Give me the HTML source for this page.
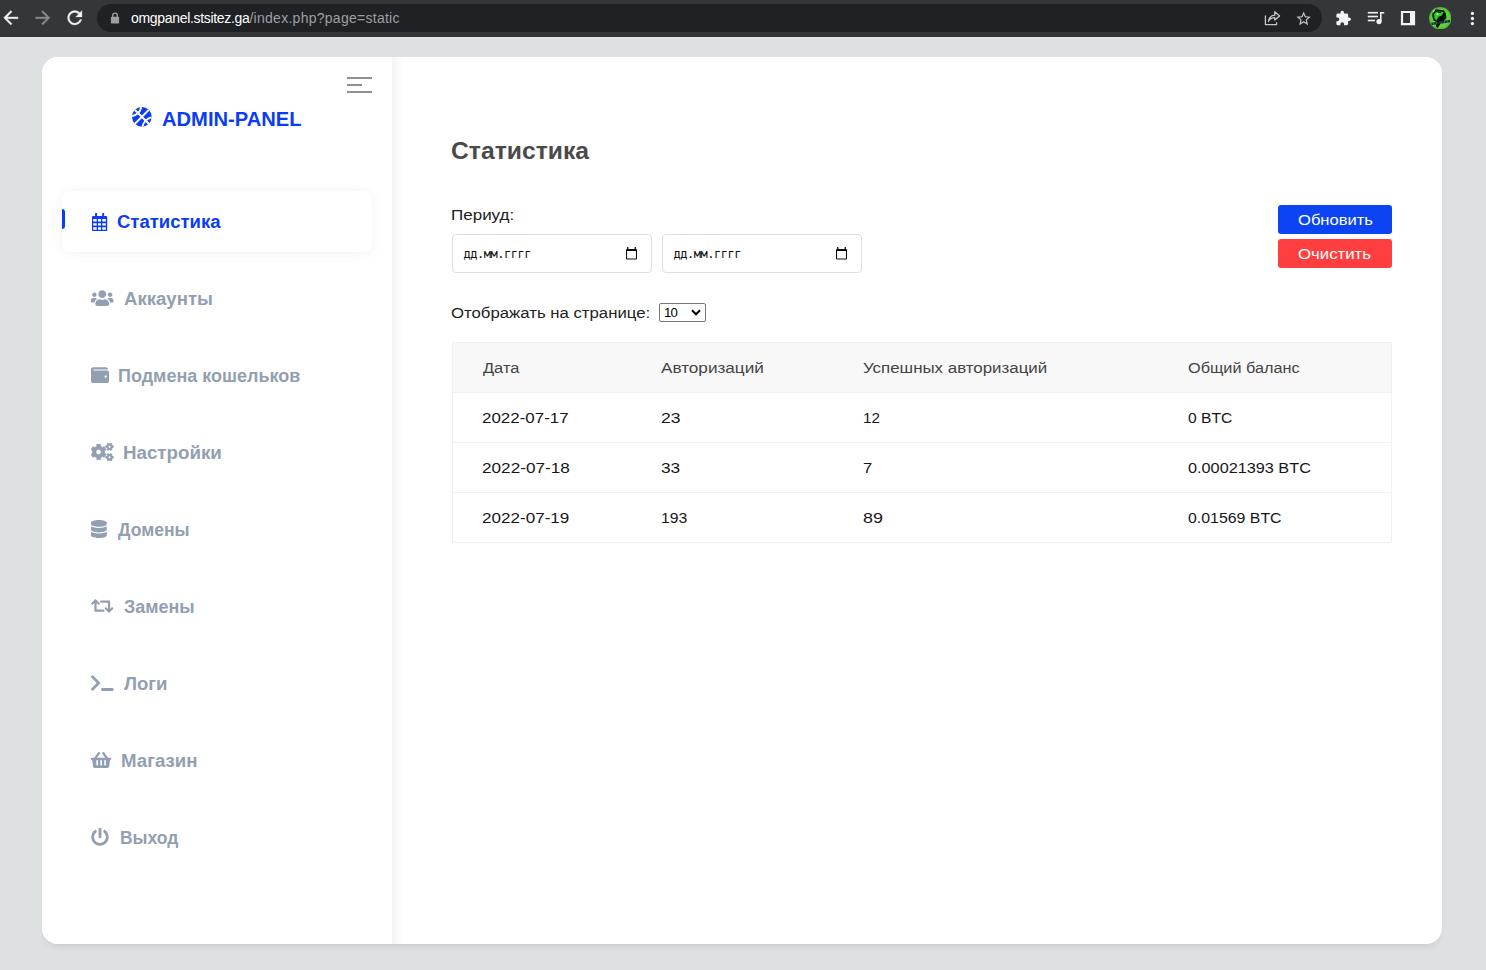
<!DOCTYPE html>
<html lang="ru">
<head>
<meta charset="utf-8">
<title>ADMIN-PANEL</title>
<style>
*{box-sizing:border-box;margin:0;padding:0}
html,body{width:1486px;height:970px;overflow:hidden}
body{background:#dde1e2;font-family:"Liberation Sans",sans-serif;position:relative;color:#222}
.mi,#logo,#title,.lbl,.td,.bt{transform-origin:0 50%}
/* browser chrome */
#chrome{position:absolute;left:0;top:0;width:1486px;height:37px;background:#35363a;box-shadow:inset 0 -1px 0 #313236,0 1px 0 #e3e7e8}
#omni{position:absolute;left:97px;top:4px;width:1225px;height:28px;border-radius:14px;background:#202124}
#url{position:absolute;left:131px;top:10px;font-size:14px;line-height:16px;color:#9aa0a6;white-space:nowrap;letter-spacing:0}
#url b{font-weight:normal;color:#fff}
.cicon{position:absolute}
/* card */
#card{position:absolute;left:42px;top:57px;width:1400px;height:887px;background:#fff;border-radius:16px;box-shadow:0 6px 7px -4px rgba(110,120,130,.2)}
#side{position:absolute;left:0;top:0;width:350px;height:887px;border-radius:16px 0 0 16px;background:#fff}
#sideshadow{position:absolute;left:350px;top:0;width:12px;height:887px;background:linear-gradient(to right,#f3f5f7 0,#f8f9f9 40%,#fcfdfd 75%,#fff 100%)}
#burger{position:absolute;left:305px;top:20px;width:25px;height:16px}
#burger i{position:absolute;left:0;height:2px;background:#909090;display:block}
#logo{position:absolute;top:50px;font-size:19.5px;line-height:24px;font-weight:bold;color:#0b3cf5;white-space:nowrap}
#active{position:absolute;left:20px;top:134px;width:310px;height:61px;border-radius:8px;background:#fff;box-shadow:0 1px 12px rgba(100,110,130,.085)}
#bar{position:absolute;left:20px;top:152px;width:3px;height:20px;background:#0b3cf5;border-radius:0 3px 3px 0}
.mi{position:absolute;font-size:18px;line-height:22px;font-weight:bold;color:#929fb1;white-space:nowrap}
.mi.on{color:#0b3cf5}
.ic{position:absolute}
/* main */
#title{position:absolute;top:80px;font-size:23.5px;line-height:28px;font-weight:bold;color:#4a4a4a;white-space:nowrap}
.lbl{position:absolute;font-size:15.5px;line-height:20px;color:#222;white-space:nowrap}
.date{position:absolute;top:177px;width:200px;height:39px;border:1px solid #dfdfdf;border-radius:4px;background:#fff}
.date span{position:absolute;left:10.5px;top:11px;font-family:"DejaVu Sans Mono","Liberation Mono",monospace;font-size:12px;line-height:16px;color:#111;letter-spacing:-0.48px}
.date svg{position:absolute;left:173.2px;top:12.2px}
#sel{position:absolute;left:617px;top:246px;width:47px;height:19px;border:1px solid #767676;border-radius:2px;background:#fff}
#sel span{position:absolute;left:4.3px;top:0.5px;font-size:12.7px;line-height:16px;color:#000;letter-spacing:-0.9px;transform:scaleX(1.04);transform-origin:0 50%}
.btn{position:absolute;left:1236px;width:114px;height:29px;border-radius:3px;color:#fff;font-size:15.5px;line-height:29px}
.bt{position:absolute;top:0;white-space:nowrap}
#tbl{position:absolute;left:410px;top:285px;width:940px;height:201px;border:1px solid #f0f0f7;background:#fff}
#th{position:absolute;left:0;top:0;width:938px;height:50px;background:#f8f8f8;border-bottom:1px solid #f0f0f7}
.tr{position:absolute;left:0;width:938px;height:50px;border-bottom:1px solid #f0f0f7}
.td{position:absolute;font-size:15.5px;line-height:20px;white-space:nowrap;color:#161616}
.th{color:#444}
</style>
</head>
<body>
<div id="chrome">
  <div id="omni"></div>

  <svg class="cicon" style="left:0.2px;top:7.2px" width="21.6" height="21.6" viewBox="0 0 24 24"><path fill="#f1f3f4" stroke="#f1f3f4" stroke-width=".35" d="M20 11H7.830l5.590-5.590L12 4l-8 8 8 8 1.410-1.410L7.830 13H20v-2z"/></svg>
  <svg class="cicon" style="left:32.300px;top:7.200px" width="21.6" height="21.6" viewBox="0 0 24 24"><path fill="#88898c" stroke="#88898c" stroke-width=".35" d="M12 4l-1.410 1.410L16.170 11H4v2h12.170l-5.580 5.590L12 20l8-8z"/></svg>
  <svg class="cicon" style="left:64.300px;top:7.200px" width="21.6" height="21.6" viewBox="0 0 24 24"><path fill="#f1f3f4" stroke="#f1f3f4" stroke-width=".3" d="M17.650 6.350C16.200 4.900 14.210 4 12 4c-4.420 0-7.990 3.580-7.990 8s3.570 8 7.990 8c3.730 0 6.840-2.550 7.730-6h-2.080c-.820 2.330-3.040 4-5.650 4-3.310 0-6-2.690-6-6s2.690-6 6-6c1.660 0 3.140.690 4.220 1.780L13 11h7V4l-2.350 2.350z"/></svg>
  <svg class="cicon" style="left:110px;top:11.500px" width="10" height="12" viewBox="0 0 10 12"><path fill="#9aa0a6" d="M1.600 4.800h6.800a.7.7 0 0 1 .7.700v5.200a.7.7 0 0 1-.7.700H1.600a.7.7 0 0 1-.7-.7V5.500a.7.700 0 0 1 .7-.7z"/><path fill="none" stroke="#9aa0a6" stroke-width="1.300" d="M2.700 5V3.400a2.300 2.300 0 0 1 4.600 0V5"/></svg>
  <svg class="cicon" style="left:1263px;top:10px" width="19" height="17" viewBox="0 0 19 17"><g fill="none" stroke="#c4c7c9" stroke-width="1.300" stroke-linejoin="round"><path d="M2.400 5.500v9.100h11.200v-2.300"/><path d="M5.500 11.300c.5-3.800 2.700-5.800 6.300-6.100V1.700l4.800 4.200-4.800 4.200V7.600c-2.700-.1-4.800 1.100-6.300 3.700z"/></g></svg>
  <svg class="cicon" style="left:1295.300px;top:9.670px" width="17.300" height="17.300" viewBox="0 0 24 24"><path fill="#c4c7c9" d="M22 9.240l-7.190-.620L12 2 9.190 8.630 2 9.240l5.460 4.730L5.820 21 12 17.270 18.180 21l-1.630-7.030L22 9.240zM12 15.400l-3.760 2.270 1-4.280-3.320-2.880 4.380-.380L12 6.100l1.710 4.040 4.380.380-3.320 2.880 1 4.280L12 15.400z"/></svg>
  <svg class="cicon" style="left:1335.300px;top:10px" width="16.600" height="16.600" viewBox="0 0 24 24"><path fill="#f1f3f4" d="M20.500 11H19V7c0-1.100-.9-2-2-2h-4V3.500C13 2.120 11.880 1 10.500 1S8 2.120 8 3.500V5H4c-1.100 0-1.990.9-1.990 2v3.800H3.500c1.490 0 2.700 1.210 2.700 2.700s-1.210 2.700-2.700 2.700H2V20c0 1.100.9 2 2 2h3.800v-1.500c0-1.490 1.210-2.700 2.700-2.700 1.490 0 2.700 1.210 2.700 2.700V22H17c1.100 0 2-.9 2-2v-4h1.500c1.380 0 2.500-1.120 2.500-2.500S21.880 11 20.500 11z"/></svg>
  <svg class="cicon" style="left:1366px;top:10px" width="20" height="16" viewBox="0 0 20 16"><g fill="#f1f3f4"><rect x="1.800" y="1.900" width="10.200" height="1.600"/><rect x="1.800" y="5.700" width="10.200" height="1.600"/><rect x="1.800" y="9.700" width="7.200" height="1.600"/><circle cx="13" cy="11.600" r="2.600"/><path d="M14 1.900h4.200v1.700h-2.600v8h-1.600z"/></g></svg>
  <svg class="cicon" style="left:1400px;top:10px" width="16" height="16" viewBox="0 0 16 16"><path fill="#f1f3f4" fill-rule="evenodd" d="M.9.900h14.200v14.300H.9zM3.100 3.100v10h6.900v-10z"/></svg>
  <svg class="cicon" style="left:1428.700px;top:6.700px" width="22.5" height="22.5" viewBox="0 0 22.5 22.5"><defs><radialGradient id="av" cx="50%" cy="50%" r="50%"><stop offset="0.750" stop-color="#5fd43c"/><stop offset="1" stop-color="#4bb532"/></radialGradient><clipPath id="avc"><circle cx="11.250" cy="11.250" r="11.250"/></clipPath></defs><circle cx="11.250" cy="11.250" r="11.250" fill="url(#av)"/><g clip-path="url(#avc)"><polygon fill="#071207" points="3.3,6.8 6.8,2.2 14.9,3.3 16.9,6.8 17.5,11.1 15.2,13.4 12.3,15.2 8.8,20.9 6.8,19.2 7.9,15.2 4.5,13.4 3.3,9.4"/><polygon fill="#27cf2c" points="5.1,6.8 8.2,4.5 14.6,5.1 12.8,8.5 9.7,9.7 7.1,13.7 5.3,10.8"/><polygon fill="#061006" points="8.5,4.2 12.3,4.8 11.7,6.2 8.8,5.6"/><polygon fill="#b6f57c" points="7.1,7.1 8.8,5.9 10.0,7.4 8.2,8.2"/><polygon fill="#d9dde0" opacity=".8" points="3.8,4.5 5.6,2.2 6.2,3.0 4.5,5.6"/><polygon fill="#1b2340" opacity=".9" points="2.3,15.7 20.9,12.8 21.2,15.2 2.6,18.3"/><g stroke="#5fd43c" stroke-width=".5" opacity=".7"><path d="M4.500 15.500v2.500M7.500 15v2.500M12 14.500v2.300M15.500 14v2M18.500 13.500v2"/></g></g></svg>
  <svg class="cicon" style="left:1469px;top:10px" width="7" height="16" viewBox="0 0 7 16"><g fill="#f1f3f4"><circle cx="3.400" cy="3.400" r="1.650"/><circle cx="3.400" cy="8.500" r="1.650"/><circle cx="3.400" cy="13.600" r="1.650"/></g></svg>
  <div id="url"><b style="letter-spacing:-0.32px">omgpanel.stsitez.ga</b><span style="letter-spacing:0.27px">/index.php?page=static</span></div>
</div>

<div id="card">
  <div id="side"></div>
  <div id="sideshadow"></div>
  <div id="burger"><i style="top:0;width:25px"></i><i style="top:7px;width:15px"></i><i style="top:14px;width:25px"></i></div>
  <svg class="ic" style="left:89px;top:48.650px" width="21.7" height="21.7" viewBox="-1.1 -1.1 2.2 2.2"><defs><clipPath id="bc"><circle cx="0" cy="0" r="1"/></clipPath></defs><circle cx="0" cy="0" r="1" fill="#0b3cf5"/><g clip-path="url(#bc)" fill="none" stroke="#fff" stroke-width="0.2"><path d="M1 -1L-1 1M-1 -1L1 1"/><circle cx="-1.223" cy="-1.223" r="1.185"/><circle cx="1.223" cy="1.223" r="1.185"/></g></svg>
  <div id="logo" style="left:119.70px;transform:scaleX(1.0339)">ADMIN-PANEL</div>
  <div id="active"></div>
  <div id="bar"></div>

  <div class="mi on" style="left:75.24px;top:154px;transform:scaleX(1.0289)">Статистика</div>
  <div class="mi" style="left:81.60px;top:231px;transform:scaleX(1.0320)">Аккаунты</div>
  <div class="mi" style="left:76.40px;top:308px;transform:scaleX(0.9992)">Подмена кошельков</div>
  <div class="mi" style="left:81.41px;top:385px;transform:scaleX(1.0406)">Настройки</div>
  <div class="mi" style="left:75.59px;top:462px;transform:scaleX(0.9757)">Домены</div>
  <div class="mi" style="left:81.82px;top:539px;transform:scaleX(0.9968)">Замены</div>
  <div class="mi" style="left:82.17px;top:616px;transform:scaleX(1.0298)">Логи</div>
  <div class="mi" style="left:78.84px;top:693px;transform:scaleX(1.0364)">Магазин</div>
  <div class="mi" style="left:77.59px;top:770px;transform:scaleX(0.9688)">Выход</div>


  <!-- sidebar icons -->
  <svg class="ic" style="left:50px;top:156px" width="16" height="19" viewBox="0 0 16 19"><path fill="#0b3cf5" d="M3.1 0h1.9v3H3.1zM10.2 0h1.9v3h-1.9z"/><path fill="#0b3cf5" fill-rule="evenodd" d="M1.2 3h12.8a1.2 1.2 0 0 1 1.2 1.2v12.7a1.2 1.2 0 0 1-1.2 1.2H1.2A1.2 1.2 0 0 1 0 16.900V4.200A1.200 1.200 0 0 1 1.200 3zM1.2 6.100h3.500v2.500H1.200zM6 6.100h3v2.500H6zM10.300 6.100h3.500v2.500h-3.500zM1.200 10.200h3.500v2.400H1.200zM6 10.200h3v2.400H6zM10.300 10.200h3.500v2.400h-3.500zM1.200 14.200h3.500v2.500H1.200zM6 14.200h3v2.500H6zM10.300 14.200h3.500v2.500h-3.500z"/></svg>
  <svg class="ic" style="left:49.4px;top:232px" width="22.5" height="18" viewBox="0 0 640 512"><path fill="#929fb1" d="M96 224c35.300 0 64-28.700 64-64s-28.700-64-64-64-64 28.700-64 64 28.700 64 64 64zm448 0c35.300 0 64-28.700 64-64s-28.700-64-64-64-64 28.700-64 64 28.700 64 64 64zm32 32h-64c-17.600 0-33.500 7.100-45.100 18.600 40.300 22.100 68.900 62 75.100 109.400h66c17.700 0 32-14.300 32-32v-32c0-35.300-28.700-64-64-64zm-256 0c61.900 0 112-50.100 112-112S381.900 32 320 32 208 82.100 208 144s50.100 112 112 112zm76.800 32h-8.300c-20.800 10-43.900 16-68.500 16s-47.600-6-68.500-16h-8.300C179.600 288 128 339.600 128 403.200V432c0 26.500 21.500 48 48 48h288c26.500 0 48-21.500 48-48v-28.800c0-63.600-51.600-115.200-115.200-115.200zm-223.700-13.400C161.500 263.100 145.600 256 128 256H64c-35.300 0-64 28.700-64 64v32c0 17.700 14.300 32 32 32h65.900c6.300-47.400 34.900-87.300 75.200-109.400z"/></svg>
  <svg class="ic" style="left:49.4px;top:309px" width="18" height="18" viewBox="0 0 512 512"><path fill="#929fb1" d="M461.200 128H80c-8.840 0-16-7.160-16-16s7.160-16 16-16h384c8.840 0 16-7.160 16-16 0-26.510-21.490-48-48-48H64C28.650 32 0 60.650 0 96v320c0 35.350 28.650 64 64 64h397.200c28.020 0 50.800-21.530 50.800-48V176c0-26.470-22.780-48-50.800-48zM416 336c-17.670 0-32-14.330-32-32s14.330-32 32-32 32 14.330 32 32-14.330 32-32 32z"/></svg>
  <svg class="ic" style="left:49.4px;top:386px" width="22.5" height="18" viewBox="0 0 640 512"><path fill="#929fb1" fill-rule="evenodd" stroke="#929fb1" stroke-width="22" stroke-linejoin="round" d="M380.9 222.9 L428.3 190.1 L378.4 103.6 L326.2 128.2 L270.7 96.2 L265.9 38.7 L166.1 38.7 L161.3 96.2 L105.8 128.2 L53.6 103.6 L3.7 190.1 L51.1 222.9 L51.1 287.1 L3.7 319.9 L53.6 406.4 L105.8 381.8 L161.3 413.8 L166.1 471.3 L265.9 471.3 L270.7 413.8 L326.2 381.8 L378.4 406.4 L428.3 319.9 L380.9 287.1Z M140.0 255.0a76 76 0 1 0 152 0a76 76 0 1 0 -152 0Z M603.1 131.8 L633.7 130.3 L633.7 81.3 L603.1 79.8 L587.9 53.3 L601.8 26.1 L559.4 1.6 L542.8 27.3 L512.2 27.3 L495.6 1.6 L453.2 26.1 L467.1 53.3 L451.9 79.8 L421.3 81.3 L421.3 130.3 L451.9 131.8 L467.1 158.3 L453.2 185.5 L495.6 210.0 L512.2 184.3 L542.8 184.3 L559.4 210.0 L601.8 185.5 L587.9 158.3Z M489.5 105.8a38 38 0 1 0 76 0a38 38 0 1 0 -76 0Z M603.1 430.7 L633.7 429.2 L633.7 380.2 L603.1 378.7 L587.9 352.2 L601.8 325.0 L559.4 300.5 L542.8 326.2 L512.2 326.2 L495.6 300.5 L453.2 325.0 L467.1 352.2 L451.9 378.7 L421.3 380.2 L421.3 429.2 L451.9 430.7 L467.1 457.2 L453.2 484.4 L495.6 508.9 L512.2 483.2 L542.8 483.2 L559.4 508.9 L601.8 484.4 L587.9 457.2Z M489.5 404.7a38 38 0 1 0 76 0a38 38 0 1 0 -76 0Z"/></svg>
  <svg class="ic" style="left:49.4px;top:463px" width="15.750" height="18" viewBox="0 0 448 512"><path fill="#929fb1" d="M448 73.143v45.714C448 159.143 347.667 192 224 192S0 159.143 0 118.857V73.143C0 32.857 100.333 0 224 0s224 32.857 224 73.143zM448 176v102.857C448 319.143 347.667 352 224 352S0 319.143 0 278.857V176c48.125 33.143 136.208 48.572 224 48.572S399.874 209.143 448 176zm0 160v102.857C448 479.143 347.667 512 224 512S0 479.143 0 438.857V336c48.125 33.143 136.208 48.572 224 48.572S399.874 369.143 448 336z"/></svg>
  <svg class="ic" style="left:49.4px;top:540px" width="22.5" height="18" viewBox="0 0 640 512"><path fill="#929fb1" d="M629.657 343.598L528.971 444.284c-9.373 9.372-24.568 9.372-33.941 0L394.343 343.598c-9.373-9.373-9.373-24.569 0-33.941l10.823-10.823c9.562-9.562 25.133-9.340 34.419.492L480 342.118V160H292.451a24.005 24.005 0 0 1-16.971-7.029l-16-16C244.361 121.851 255.069 96 276.451 96H520c13.255 0 24 10.745 24 24v222.118l40.416-42.792c9.285-9.831 24.856-10.054 34.419-.492l10.823 10.823c9.372 9.372 9.372 24.569-.001 33.941zm-265.138 15.431A23.999 23.999 0 0 0 347.548 352H160V169.881l40.416 42.792c9.286 9.831 24.856 10.054 34.419.491l10.822-10.822c9.373-9.373 9.373-24.569 0-33.941L144.971 67.716c-9.373-9.373-24.569-9.373-33.941 0L10.343 168.402c-9.373 9.373-9.373 24.569 0 33.941l10.822 10.822c9.562 9.562 25.133 9.340 34.419-.491L96 169.881V392c0 13.255 10.745 24 24 24h243.549c21.382 0 32.090-25.851 16.971-40.971l-16.001-16z"/></svg>
  <svg class="ic" style="left:49.4px;top:617px" width="22.5" height="18" viewBox="0 0 640 512"><path fill="#929fb1" d="M257.981 272.971L63.638 467.314c-9.373 9.373-24.569 9.373-33.941 0L7.029 444.647c-9.357-9.357-9.375-24.522-.04-33.901L161.011 256 6.990 101.255c-9.335-9.379-9.317-24.544.04-33.901l22.667-22.667c9.373-9.373 24.569-9.373 33.941 0L257.981 239.030c9.373 9.372 9.373 24.568 0 33.941zM640 456v-32c0-13.255-10.745-24-24-24H312c-13.255 0-24 10.745-24 24v32c0 13.255 10.745 24 24 24h304c13.255 0 24-10.745 24-24z"/></svg>
  <svg class="ic" style="left:49.4px;top:694px" width="20.250" height="18" viewBox="0 0 576 512"><path fill="#929fb1" d="M576 216v16c0 13.255-10.745 24-24 24h-8l-26.113 182.788C514.509 462.435 494.257 480 470.370 480H105.630c-23.887 0-44.139-17.565-47.518-41.212L32 256h-8c-13.255 0-24-10.745-24-24v-16c0-13.255 10.745-24 24-24h67.341l106.780-146.821c10.395-14.292 30.407-17.453 44.701-7.058 14.293 10.395 17.453 30.408 7.058 44.701L170.477 192h235.046L326.120 82.821c-10.395-14.292-7.234-34.306 7.059-44.701 14.291-10.395 34.306-7.235 44.701 7.058L484.659 192H552c13.255 0 24 10.745 24 24zM312 392V280c0-13.255-10.745-24-24-24s-24 10.745-24 24v112c0 13.255 10.745 24 24 24s24-10.745 24-24zm112 0V280c0-13.255-10.745-24-24-24s-24 10.745-24 24v112c0 13.255 10.745 24 24 24s24-10.745 24-24zm-224 0V280c0-13.255-10.745-24-24-24s-24 10.745-24 24v112c0 13.255 10.745 24 24 24s24-10.745 24-24z"/></svg>
  <svg class="ic" style="left:49.4px;top:771px" width="18" height="18" viewBox="0 0 512 512"><path fill="#929fb1" d="M400 54.100c63 45 104 118.600 104 201.900 0 136.800-110.800 247.700-247.500 248C120 504.300 8.200 393 8 256.400 7.900 173.100 48.900 99.300 111.800 54.200c11.700-8.300 28-4.800 35 7.700L162.600 90c5.900 10.500 3.100 23.800-6.600 31-41.500 30.800-68 79.600-68 134.900-.1 92.300 74.500 168.100 168 168.100 91.600 0 168.600-74.200 168-169.100-.3-51.800-24.700-101.800-68.100-134-9.700-7.200-12.400-20.500-6.500-30.900l15.800-28.100c7-12.400 23.200-16.100 34.800-7.800zM296 264V24c0-13.300-10.700-24-24-24h-32c-13.300 0-24 10.700-24 24v240c0 13.300 10.700 24 24 24h32c13.300 0 24-10.700 24-24z"/></svg>

  <div id="title" style="left:409.33px;transform:scaleX(1.0505)">Статистика</div>
  <div class="lbl" style="left:409.43px;top:148px;transform:scaleX(1.0968)">Периуд:</div>
  <div class="date" style="left:410px"><span>дд.мм.гггг</span><svg width="11" height="12.6" viewBox="0 0 11 12.6"><path fill="#0a0a0a" fill-rule="evenodd" d="M1.100 0h1.300v1.900h6.200V0h1.300v1.900H10a1 1 0 0 1 1 1v8.700a1 1 0 0 1-1 1H1a1 1 0 0 1-1-1V2.900a1 1 0 0 1 1-1h.1zM1.050 4v7.500h8.900V4z"/></svg></div>
  <div class="date" style="left:620px"><span>дд.мм.гггг</span><svg width="11" height="12.6" viewBox="0 0 11 12.6"><path fill="#0a0a0a" fill-rule="evenodd" d="M1.100 0h1.300v1.900h6.200V0h1.300v1.900H10a1 1 0 0 1 1 1v8.700a1 1 0 0 1-1 1H1a1 1 0 0 1-1-1V2.900a1 1 0 0 1 1-1h.1zM1.050 4v7.500h8.900V4z"/></svg></div>
  <div class="lbl" style="left:409.33px;top:245.5px;transform:scaleX(1.0807)">Отображать на странице:</div>
  <div id="sel"><span>10</span><svg style="position:absolute;left:31.4px;top:4.800px" width="10" height="7" viewBox="0 0 10 7"><path d="M1 1.200L5 5.200L9 1.200" fill="none" stroke="#000" stroke-width="2.1"/></svg></div>
  <div class="btn" style="top:148px;background:#0c44f4"><span class="bt" style="left:19.60px;transform:scaleX(1.0684)">Обновить</span></div>
  <div class="btn" style="top:182px;background:#ff3f3f"><span class="bt" style="left:19.60px;transform:scaleX(1.0817)">Очистить</span></div>

  <div id="tbl">
    <div id="th"></div>
    <div class="tr" style="top:50px"></div>
    <div class="tr" style="top:100px"></div>
    <div class="tr" style="top:150px;border-bottom:none"></div>
    <div class="td th" style="left:29.81px;top:15px;transform:scaleX(1.0585)">Дата</div>
    <div class="td th" style="left:208.41px;top:15px;transform:scaleX(1.1060)">Авторизаций</div>
    <div class="td th" style="left:410.41px;top:15px;transform:scaleX(1.0896)">Успешных авторизаций</div>
    <div class="td th" style="left:734.83px;top:15px;transform:scaleX(1.0482)">Общий баланс</div>

    <div class="td" style="left:29.01px;top:65px;transform:scaleX(1.0932)">2022-07-17</div>
    <div class="td" style="left:208.01px;top:65px;transform:scaleX(1.1317)">23</div>
    <div class="td" style="left:409.76px;top:65px;transform:scaleX(0.9812)">12</div>
    <div class="td" style="left:735.03px;top:65px;transform:scaleX(1.0058)">0 BTC</div>

    <div class="td" style="left:29.01px;top:115px;transform:scaleX(1.1074)">2022-07-18</div>
    <div class="td" style="left:208.41px;top:115px;transform:scaleX(1.1142)">33</div>
    <div class="td" style="left:410.06px;top:115px;transform:scaleX(1.0772)">7</div>
    <div class="td" style="left:735.13px;top:115px;transform:scaleX(1.0484)">0.00021393 BTC</div>

    <div class="td" style="left:29.01px;top:165px;transform:scaleX(1.1010)">2022-07-19</div>
    <div class="td" style="left:207.76px;top:165px;transform:scaleX(1.0189)">193</div>
    <div class="td" style="left:410.01px;top:165px;transform:scaleX(1.1562)">89</div>
    <div class="td" style="left:735.13px;top:165px;transform:scaleX(1.0241)">0.01569 BTC</div>
  </div>
</div>
</body>
</html>
